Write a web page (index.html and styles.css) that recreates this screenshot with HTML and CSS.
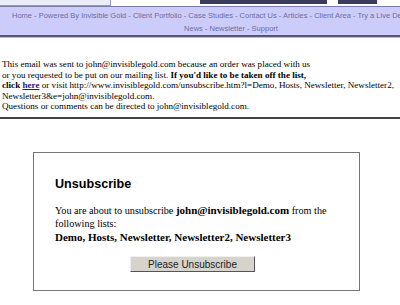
FILE: index.html
```html
<!DOCTYPE html>
<html>
<head>
<meta charset="utf-8">
<link rel="stylesheet" href="styles.css">
</head>
<body>
<div class="page">
  <div class="topstrip">
    <div class="tab-light"></div>
    <div class="tab-dark wide"></div>
    <div class="tab-dark small"></div>
  </div>
  <div class="nav">
    <div class="nav-line first">Home - Powered By Invisible Gold - Client Portfolio - Case Studies - Contact Us - Articles - Client Area - Try a Live Demo -</div>
    <div class="nav-line">News - Newsletter - Support</div>
  </div>
  <div class="notice">
    This email was sent to john@invisiblegold.com because an order was placed with us<br>
    or you requested to be put on our mailing list. <b>If you'd like to be taken off the list,<br>
    click <a href="#">here</a></b> or visit http://www.invisiblegold.com/unsubscribe.htm?l=Demo, Hosts, Newsletter, Newsletter2,<br>
    Newsletter3&amp;e=john@invisiblegold.com.<br>
    Questions or comments can be directed to john@invisiblegold.com.
  </div>
  <div class="rule"></div>
  <div class="box">
    <h2 class="box-title">Unsubscribe</h2>
    <p class="box-text">You are about to unsubscribe <b>john@invisiblegold.com</b> from the<br>following lists:<br><b>Demo, Hosts, Newsletter, Newsletter2, Newsletter3</b></p>
    <div class="box-actions"><button class="btn">Please Unsubscribe</button></div>
  </div>
</div>
</body>
</html>
```
FILE: styles.css
```css
html, body { margin: 0; padding: 0; background: #fff; overflow: hidden; }
.page { width: 400px; overflow: hidden; }
.topstrip { height: 6px; display: flex; }
.tab-light { width: 110px; height: 5px; background: #ececf8; border-right: 1px solid #9a9ab0; border-bottom: 1px solid #9a9ab0; }
.tab-dark { height: 4px; background: #3c3c5e; }
.tab-dark.wide { margin-left: 89px; width: 127px; }
.tab-dark.small { margin-left: 11px; width: 39px; }
.nav { width: 462px; background: #ccccfa; border-top: 1px solid #7a7aa8; border-bottom: 2px solid #55557a; box-shadow: 0 1px 0 #c0c0cc; padding: 2px 0 0; text-align: center; font-family: "Liberation Sans", sans-serif; font-size: 7.5px; line-height: 13px; color: #6c6ca0; white-space: nowrap; }
.nav-line.first { text-align: left; padding-left: 12px; }
.notice { margin-top: 22px; padding-left: 2px; font-family: "Liberation Serif", serif; font-size: 9.1px; line-height: 10.5px; color: #000; white-space: nowrap; }
.notice a { color: #1a1a8a; }
.rule { margin-top: 5px; height: 2px; background: #444; }
.box { margin: 33px 0 0 33px; width: 327px; box-sizing: border-box; border: 1px solid #777; padding: 23px 21px 18px; }
.box-title { margin: 0; font-family: "Liberation Sans", sans-serif; font-size: 12.6px; font-weight: bold; line-height: 16px; }
.box-text { margin: 12px 0 0; font-family: "Liberation Serif", serif; font-size: 10.2px; line-height: 13.5px; white-space: nowrap; }
.box-text b { font-size: 11px; }
.box-actions { margin-top: 12px; padding-left: 75px; display: flex; }
.btn { width: 125px; height: 16px; padding: 0; background: #d6d3cc; border: 1px solid; border-color: #f0f0f0 #555 #555 #f0f0f0; font-family: "Liberation Sans", sans-serif; font-size: 10px; color: #222; }
```
